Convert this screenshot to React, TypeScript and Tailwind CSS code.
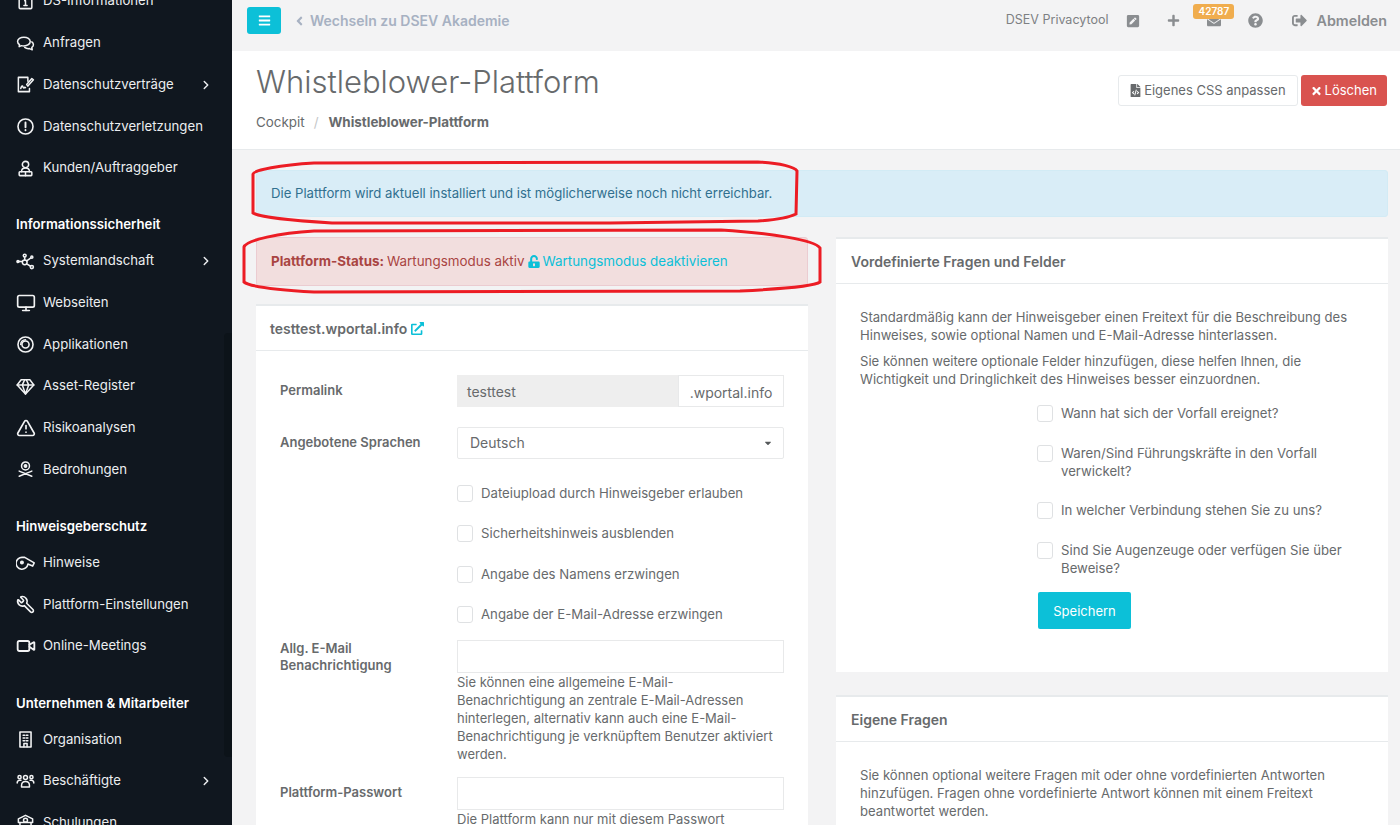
import type { ReactNode } from "react";
import {
  AlertTriangle,
  ChevronRight,
  Monitor,
  Wrench,
  Video,
} from "lucide-react";
import {
  FaAngleLeft,
  FaBars,
  FaCaretDown,
  FaEnvelope,
  FaExternalLinkAlt,
  FaFileCode,
  FaPenSquare,
  FaPlus,
  FaQuestionCircle,
  FaSignOutAlt,
  FaTimes,
  FaUnlockAlt,
} from "react-icons/fa";

const line = { fill: "none", stroke: "currentColor", strokeWidth: 1.9, strokeLinecap: "round", strokeLinejoin: "round" } as const;

function Svg({ children }: { children: ReactNode }) {
  return (
    <svg viewBox="0 0 24 24" className="h-[19px] w-[19px]" {...line}>
      {children}
    </svg>
  );
}

const icons: Record<string, ReactNode> = {
  info: <Svg><rect x="4" y="3" width="16" height="18" rx="1.5" /><path d="M12 11v6M10 17h4M11 11h1M12 7v.5" /></Svg>,
  comments: <Svg><path d="M10 4c-4.4 0-8 2.4-8 5.500 0 1.600 1 3 2.400 4L4 16l3-1.300c1 .3 2 .4 3 .4 4.400 0 8-2.500 8-5.600S14.400 4 10 4z" /><path d="M20 10c1.300 1 2 2.200 2 3.500 0 1.400-.8 2.600-2 3.500l.5 3-3.500-1.600c-2.400.3-4.500-.2-6-1.400" /></Svg>,
  contract: <Svg><path d="M15 8V3H3v18h14v-4" /><path d="M6 17c1-3 2-4 2.500-2.500S10 17 11 15.500l1 .5" /><path d="M15 14l7-8-2-1.500L13.500 12z" /></Svg>,
  alert: <Svg><circle cx="12" cy="12" r="9.5" strokeWidth="2" /><path d="M12 7v6M12 16.500v.3" strokeWidth="2.4" /></Svg>,
  client: <Svg><circle cx="12" cy="7" r="4" /><path d="M7 16c0-3 2-4.500 5-4.500s5 1.500 5 4.500" /><rect x="4" y="16" width="16" height="5" rx="1" /><path d="M12 16v5" /></Svg>,
  system: <Svg><circle cx="2.5" cy="12" r="1.3" fill="currentColor" /><path d="M4 12h4" /><circle cx="11" cy="4.5" r="1.8" /><circle cx="11" cy="13" r="3" /><circle cx="20" cy="6.5" r="1.3" /><circle cx="20" cy="19" r="2" /><path d="M11 6.500V10M14 11l4.800-3.600M13.500 15l5 3" /></Svg>,
  web: <Monitor className="h-[20px] w-[20px]" strokeWidth={2} />,
  disc: <Svg><circle cx="12" cy="12" r="9.5" strokeWidth="2" /><circle cx="12" cy="12" r="4.5" strokeWidth="2" /><path d="M12 6a6 6 0 0 0-6 6" /></Svg>,
  gem: <Svg><path d="M6.500 3.500h11L22.500 10 12 21.500 1.500 10z" /><path d="M1.500 10h21M8 10l4 11.500L16 10M8 10l3-6.500M16 10l-3-6.500" /></Svg>,
  risk: <AlertTriangle className="h-[20px] w-[20px]" strokeWidth={2} />,
  threat: <Svg><circle cx="12" cy="7.5" r="5" /><circle cx="12" cy="7.500" r="1.500" fill="currentColor" /><path d="M4 14l16 6.500M20 14L4 20.500" /></Svg>,
  whistle: <Svg><path d="M8 5.500h3L23 12.500l-2 4-6-2.500a7.500 7.500 0 1 1-7-8.500z" strokeWidth="2" /><circle cx="7.5" cy="12" r="1.6" fill="currentColor" /></Svg>,
  wrench: <Wrench className="h-[19px] w-[19px] -scale-x-100" strokeWidth={2} />,
  video: <Video className="h-[20px] w-[20px]" strokeWidth={2.2} />,
  org: <Svg><rect x="5" y="2.5" width="14" height="19" strokeWidth="2" /><path d="M9 6.500h2M13 6.500h2M9 10h2M13 10h2M9 13.500h2M13 13.500h2M10 21v-4h4v4" /></Svg>,
  people: <Svg><circle cx="12" cy="7" r="2.5" /><circle cx="4.5" cy="6.5" r="2" /><circle cx="19.5" cy="6.5" r="2" /><path d="M7 19v-2c0-3 2-5 5-5s5 2 5 5v2zM1.500 14c0-2 1.300-3.500 3-3.500h1.800M22.500 14c0-2-1.300-3.500-3-3.500h-1.800" /></Svg>,
  train: <Svg><path d="M12 3l9 4.500V12H3V7.500z" /><circle cx="12" cy="9" r="2.5" /><path d="M5 12v8M19 12v8" /></Svg>,
};

type Row = { label: string; icon: string; more?: boolean } | { heading: string };

const nav: Row[] = [
  { label: "DS-Informationen", icon: "info" },
  { label: "Anfragen", icon: "comments" },
  { label: "Datenschutzverträge", icon: "contract", more: true },
  { label: "Datenschutzverletzungen", icon: "alert" },
  { label: "Kunden/Auftraggeber", icon: "client" },
  { heading: "Informationssicherheit" },
  { label: "Systemlandschaft", icon: "system", more: true },
  { label: "Webseiten", icon: "web" },
  { label: "Applikationen", icon: "disc" },
  { label: "Asset-Register", icon: "gem" },
  { label: "Risikoanalysen", icon: "risk" },
  { label: "Bedrohungen", icon: "threat" },
  { heading: "Hinweisgeberschutz" },
  { label: "Hinweise", icon: "whistle" },
  { label: "Plattform-Einstellungen", icon: "wrench" },
  { label: "Online-Meetings", icon: "video" },
  { heading: "Unternehmen & Mitarbeiter" },
  { label: "Organisation", icon: "org" },
  { label: "Beschäftigte", icon: "people", more: true },
  { label: "Schulungen", icon: "train" },
];

function Sidebar() {
  return (
    <aside className="relative h-[825px] w-[232px] shrink-0 overflow-hidden bg-[#10171f]">
      <div className="mt-[-19.5px]">
        {nav.map((row) =>
          "heading" in row ? (
            <div key={row.heading} className="flex h-[51.5px] items-end pb-[6px] pl-[16px] text-[13.2px] leading-[20px] font-semibold text-white">
              {row.heading}
            </div>
          ) : (
            <div key={row.label} className="flex h-[41.7px] items-center pl-[16px] pr-[19px] text-[13.2px] text-[#eceef0]">
              <span className="flex w-[27px] shrink-0 items-center text-[#f2f3f4]">{icons[row.icon]}</span>
              <span className="flex-1">{row.label}</span>
              {row.more && <ChevronRight className="h-[14px] w-[14px]" strokeWidth={2.5} />}
            </div>
          ),
        )}
      </div>
      <div className="absolute right-0 top-[333px] h-[424px] w-[8px] rounded-l bg-[#0c1319]" />
    </aside>
  );
}

function TopBar() {
  return (
    <header className="flex h-[51px] items-center bg-[#f3f3f4] pb-[10px] pl-[15px] pr-[13px]">
      <button className="flex h-[27px] w-[34px] items-center justify-center rounded-[3px] bg-[#0cc0d8] text-white">
        <FaBars className="h-[13px] w-[13px]" />
      </button>
      <span className="ml-[13px] flex items-center gap-[5px] text-[14px] font-semibold text-[#a7b1c2]">
        <FaAngleLeft className="h-[14px] w-[11px]" />
        Wechseln zu DSEV Akademie
      </span>
      <span className="ml-auto text-[12.5px] text-[#7d8083]">DSEV Privacytool</span>
      <FaPenSquare className="ml-[18px] h-[14px] w-[14px] text-[#8a8d90]" />
      <FaPlus className="ml-[27px] h-[13px] w-[13px] text-[#8a8d90]" />
      <span className="relative ml-[27px] flex">
        <FaEnvelope className="h-[14px] w-[14px] text-[#8a8d90]" />
        <span className="absolute left-[-14px] top-[-10px] rounded-[3px] bg-[#f0ad4e] px-[5px] text-[10px] leading-[15px] font-semibold text-white">42787</span>
      </span>
      <FaQuestionCircle className="ml-[27px] h-[15px] w-[15px] text-[#8a8d90]" />
      <FaSignOutAlt className="ml-[29px] h-[15px] w-[15px] text-[#8a8d90]" />
      <span className="ml-[9px] text-[14.3px] font-semibold text-[#8a8d90]">Abmelden</span>
    </header>
  );
}

function TitleBlock() {
  return (
    <section className="flex h-[99px] items-start justify-between border-b border-[#e7eaec] bg-white pl-[24px] pr-[13px]">
      <div>
        <h1 className="mt-[11px] text-[31px] leading-[40px] font-light text-[#676a6c]">Whistleblower-Plattform</h1>
        <div className="mt-[10px] flex items-center text-[13.4px] leading-[20px] text-[#676a6c]">
          Cockpit
          <span className="mx-[9px] text-[#c4c6c8]">/</span>
          <b className="ml-[1px] font-bold">Whistleblower-Plattform</b>
        </div>
      </div>
      <div className="mt-[24px] flex gap-[3px]">
        <button className="flex h-[31px] items-center gap-[3px] rounded-[3px] border border-[#e7eaec] bg-white px-[11px] text-[13px] text-[#676a6c]">
          <FaFileCode className="h-[13px] w-[11px]" />
          Eigenes CSS anpassen
        </button>
        <button className="flex h-[31px] items-center gap-[3px] rounded-[3px] bg-[#d9534f] px-[10px] text-[13px] text-white">
          <FaTimes className="h-[12px] w-[11px]" />
          Löschen
        </button>
      </div>
    </section>
  );
}

function Check({ children }: { children: ReactNode }) {
  return (
    <div className="flex gap-[8px]">
      <span className="mt-[1px] h-[17px] w-[16px] shrink-0 rounded-[3px] border border-[#dfe1e3] bg-white" />
      <span className="text-[13.2px] leading-[18px] text-[#676a6c]">{children}</span>
    </div>
  );
}

function CardHead({ children, className }: { children: ReactNode; className: string }) {
  return (
    <div className={`flex h-[45px] items-center border-b border-[#e7eaec] text-[14px] font-semibold text-[#676a6c] ${className}`}>
      {children}
    </div>
  );
}

function Label({ children }: { children: ReactNode }) {
  return <div className="w-[177px] shrink-0 text-[13px] leading-[17px] font-semibold text-[#676a6c]">{children}</div>;
}

function LeftColumn() {
  return (
    <div className="flex w-[552px] flex-col">
      <div className="flex h-[49px] items-center rounded-[3px] border border-[#ebccd1] bg-[#f2dede] px-[14px] text-[13.4px] text-[#a94442]">
        <b className="mr-[3px] font-bold">Plattform-Status:</b> Wartungsmodus aktiv
        <FaUnlockAlt className="ml-[3px] mr-[3px] h-[13px] w-[12px] text-[#0cc0d8]" />
        <span className="text-[#0cc0d8]">Wartungsmodus deaktivieren</span>
      </div>

      <div className="mt-[18px] border-t-2 border-[#e7eaec] bg-white pb-[60px]">
        <CardHead className="px-[14px]">
          testtest.wportal.info
          <FaExternalLinkAlt className="ml-[4px] h-[13px] w-[13px] text-[#0cc0d8]" />
        </CardHead>
        <div className="px-[24px] pt-[24px]">
          <div className="flex">
            <Label><div className="pt-[7px]">Permalink</div></Label>
            <div className="flex h-[32px] flex-1">
              <div className="flex w-[221px] items-center bg-[#eeeeee] px-[10px] text-[14px] text-[#676a6c]">testtest</div>
              <div className="flex flex-1 items-center justify-center border border-[#e8e9ea] pt-[3px] text-[14px] text-[#676a6c]">.wportal.info</div>
            </div>
          </div>
          <div className="mt-[20px] flex">
            <Label><div className="pt-[7px]">Angebotene Sprachen</div></Label>
            <div className="flex h-[32px] flex-1 items-center justify-between rounded-[2px] border border-[#e8e9ea] pb-[1px] pl-[12px] pr-[10px] text-[14px] text-[#676a6c]">
              Deutsch
              <FaCaretDown className="h-[10px] w-[10px] text-[#55585a]" />
            </div>
          </div>
          <div className="ml-[177px] mt-[25px] flex flex-col gap-[22.3px]">
            <Check>Dateiupload durch Hinweisgeber erlauben</Check>
            <Check>Sicherheitshinweis ausblenden</Check>
            <Check>Angabe des Namens erzwingen</Check>
            <Check>Angabe der E-Mail-Adresse erzwingen</Check>
          </div>
          <div className="mt-[17px] flex">
            <Label>Allg. E-Mail<br />Benachrichtigung</Label>
            <div className="flex-1">
              <div className="h-[33px] border border-[#e8e9ea]" />
              <p className="whitespace-nowrap text-[13px] leading-[18px] text-[#676a6c]">
                Sie können eine allgemeine E-Mail-<br />
                Benachrichtigung an zentrale E-Mail-Adressen<br />
                hinterlegen, alternativ kann auch eine E-Mail-<br />
                Benachrichtigung je verknüpftem Benutzer aktiviert<br />
                werden.
              </p>
            </div>
          </div>
          <div className="mt-[14px] flex">
            <Label><div className="pt-[7px]">Plattform-Passwort</div></Label>
            <div className="flex-1">
              <div className="h-[33px] border border-[#e8e9ea]" />
              <p className="text-[13px] leading-[18px] text-[#676a6c]">Die Plattform kann nur mit diesem Passwort</p>
            </div>
          </div>
        </div>
      </div>
    </div>
  );
}

function RightColumn() {
  return (
    <div className="flex w-[552px] flex-col">
      <div className="border-t-2 border-[#e7eaec] bg-white">
        <CardHead className="px-[15px]">Vordefinierte Fragen und Felder</CardHead>
        <div className="h-[388px] px-[24px] pt-[24px] text-[13.1px] leading-[18px] text-[#676a6c]">
          <p>Standardmäßig kann der Hinweisgeber einen Freitext für die Beschreibung des Hinweises, sowie optional Namen und E-Mail-Adresse hinterlassen.</p>
          <p className="mt-[8px]">Sie können weitere optionale Felder hinzufügen, diese helfen Ihnen, die Wichtigkeit und Dringlichkeit des Hinweises besser einzuordnen.</p>
          <div className="ml-[177px] mt-[16px] flex flex-col gap-[21.7px]">
            <Check>Wann hat sich der Vorfall ereignet?</Check>
            <Check>Waren/Sind Führungskräfte in den Vorfall verwickelt?</Check>
            <Check>In welcher Verbindung stehen Sie zu uns?</Check>
            <Check>Sind Sie Augenzeuge oder verfügen Sie über Beweise?</Check>
          </div>
          <button className="ml-[178px] mt-[15px] h-[37px] w-[93px] rounded-[2px] bg-[#0cc0d8] text-[13px] text-white">Speichern</button>
        </div>
      </div>

      <div className="mt-[23px] border-t-2 border-[#e7eaec] bg-white pb-[60px]">
        <CardHead className="px-[15px]">Eigene Fragen</CardHead>
        <p className="px-[24px] pt-[24px] text-[13.1px] leading-[18px] text-[#676a6c]">
          Sie können optional weitere Fragen mit oder ohne vordefinierten Antworten hinzufügen. Fragen ohne vordefinierte Antwort können mit einem Freitext beantwortet werden.
        </p>
      </div>
    </div>
  );
}

// hand-drawn red marks on top of the screenshot
function Annotations() {
  return (
    <svg className="pointer-events-none absolute left-0 top-0 h-[825px] w-[1400px]" viewBox="0 0 1400 825" fill="none" stroke="#ec1c24" strokeWidth="3">
      <path d="M253 174C254 170 280 165 314 163L758 162C780 163 795 167 797 171L796 214C790 217 775 220 758 221L610 223L332 223C300 221 260 218 253 213Z" />
      <path d="M244 247C246 240 280 233 314 231L721 230C770 233 815 240 820 248L820 282C815 286 780 289 740 291L314 292C280 290 250 287 244 282Z" />
    </svg>
  );
}

export default function App() {
  return (
    <div className="relative flex h-[825px] w-[1400px] overflow-hidden bg-[#f3f3f4] [font-family:Inter,sans-serif]">
      <Sidebar />
      <main className="min-w-0 flex-1">
        <TopBar />
        <TitleBlock />
        <div className="pl-[24px] pr-[12px] pt-[20px]">
          <div className="flex h-[47px] items-center rounded-[3px] border border-[#d2ebf5] bg-[#d9edf7] px-[14px] text-[13.15px] text-[#31708f]">
            Die Plattform wird aktuell installiert und ist möglicherweise noch nicht erreichbar.
          </div>
          <div className="mt-[20px] flex justify-between">
            <LeftColumn />
            <RightColumn />
          </div>
        </div>
      </main>
      <Annotations />
    </div>
  );
}
